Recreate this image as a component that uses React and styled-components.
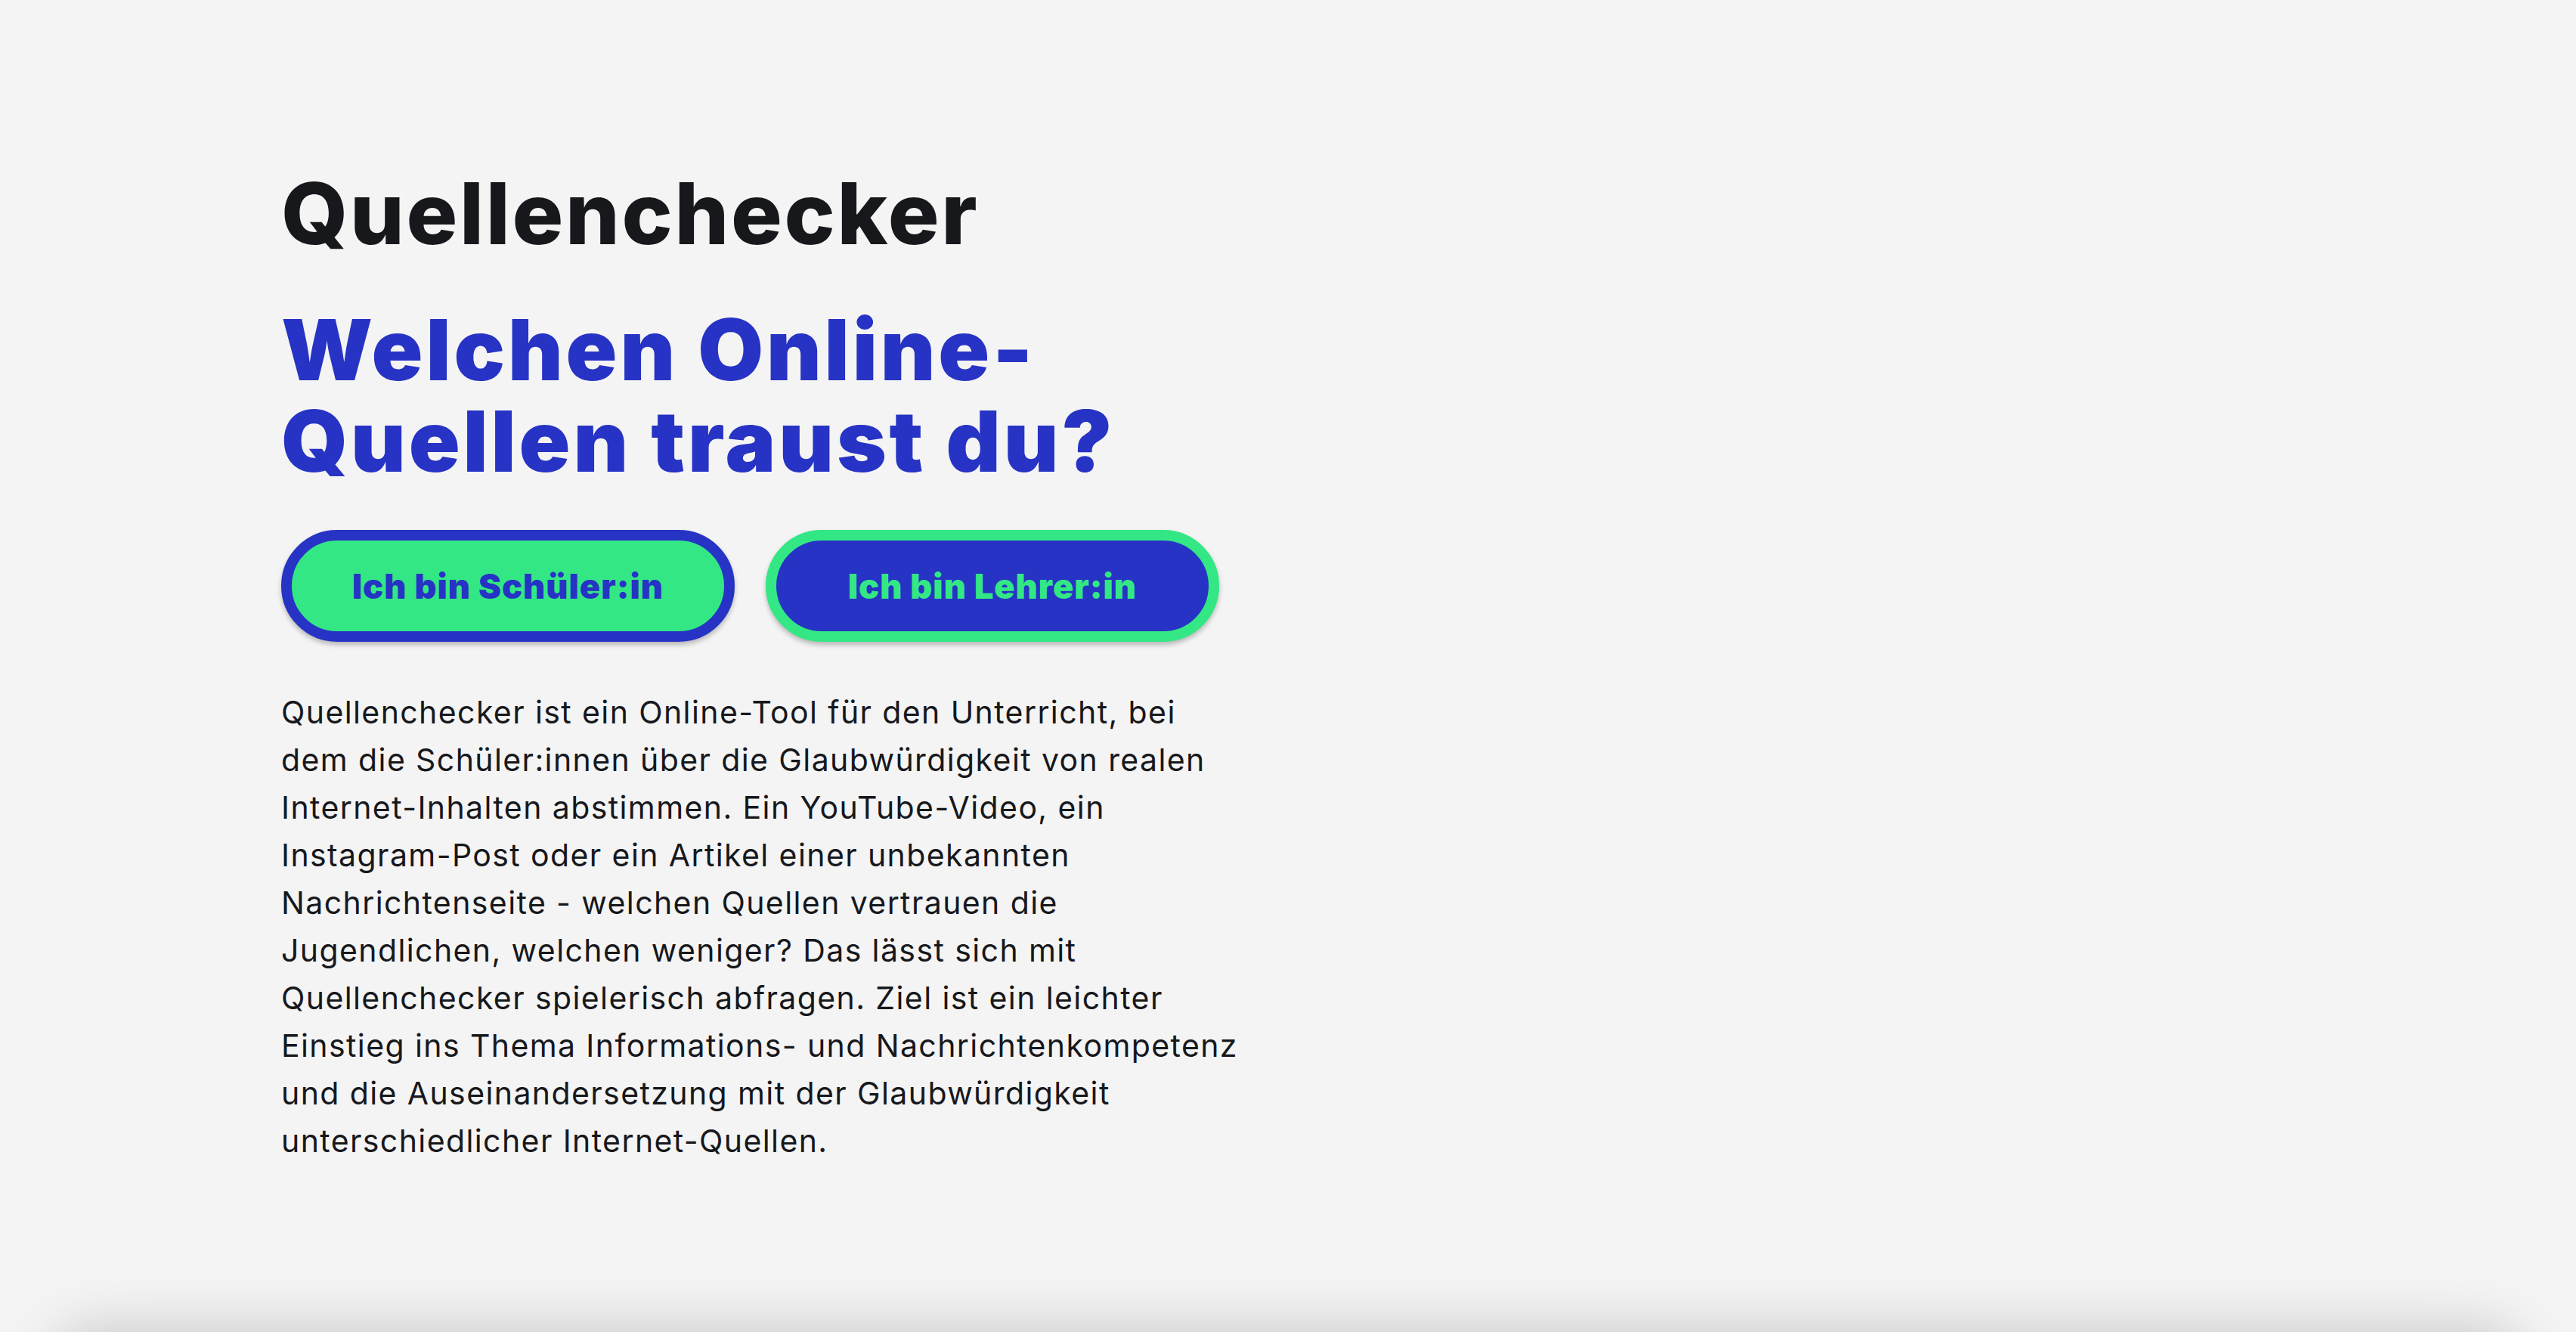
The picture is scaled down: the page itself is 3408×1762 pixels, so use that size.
import React from 'react'
import styled, { createGlobalStyle } from 'styled-components'

const GlobalStyle = createGlobalStyle`
  html, body {
    margin: 0;
    padding: 0;
    background: #f4f4f4;
  }
  body {
    font-family: 'Inter', 'Liberation Sans', sans-serif;
    color: #17181c;
  }
`

const App = () => {
  return (
    <Page>
      <GlobalStyle />
      <Hero>
        <Title>Quellenchecker</Title>
        <Headline>
          Welchen Online-
          <br />
          Quellen traust du?
        </Headline>
        <Actions>
          <RoleButton variant="student">Ich bin Schüler:in</RoleButton>
          <RoleButton variant="teacher">Ich bin Lehrer:in</RoleButton>
        </Actions>
        <Intro>
          Quellenchecker ist ein Online-Tool für den Unterricht, bei
          <br />
          dem die Schüler:innen über die Glaubwürdigkeit von realen
          <br />
          Internet-Inhalten abstimmen. Ein YouTube-Video, ein
          <br />
          Instagram-Post oder ein Artikel einer unbekannten
          <br />
          Nachrichtenseite - welchen Quellen vertrauen die
          <br />
          Jugendlichen, welchen weniger? Das lässt sich mit
          <br />
          Quellenchecker spielerisch abfragen. Ziel ist ein leichter
          <br />
          Einstieg ins Thema Informations- und Nachrichtenkompetenz
          <br />
          und die Auseinandersetzung mit der Glaubwürdigkeit
          <br />
          unterschiedlicher Internet-Quellen.
        </Intro>
      </Hero>
      <Card />
    </Page>
  )
}

const Page = styled.div`
  background: #f4f4f4;
  padding-bottom: 120px;
`

const Hero = styled.section`
  min-height: 100vh;
  box-sizing: border-box;
  padding: 226px 0 0 372px;
  display: flex;
  flex-direction: column;
  align-items: flex-start;
`

const Title = styled.h1`
  margin: 0;
  font-size: 113px;
  line-height: 113px;
  font-weight: 800;
  letter-spacing: 2.7px;
  color: #17181c;
`

const Headline = styled.h2`
  margin: 63px 0 0;
  font-size: 112px;
  line-height: 121px;
  font-weight: 900;
  letter-spacing: 3.9px;
  color: #2733c4;
`

const Actions = styled.div`
  display: flex;
  gap: 41px;
  margin-top: 57px;
`

const RoleButton = styled.button`
  width: 600px;
  height: 148px;
  box-sizing: border-box;
  border-radius: 74px;
  border: 14px solid ${(props) => (props.variant === 'student' ? '#2733c4' : '#33e884')};
  background: ${(props) => (props.variant === 'student' ? '#33e884' : '#2733c4')};
  color: ${(props) => (props.variant === 'student' ? '#2733c4' : '#33e884')};
  font-family: 'Inter', 'Liberation Sans', sans-serif;
  font-size: 45px;
  font-weight: 900;
  letter-spacing: 1px;
  box-shadow: 0 4px 6px rgba(0, 0, 0, 0.25);
  cursor: pointer;
  display: flex;
  align-items: center;
  justify-content: center;
  padding: 0;
`

const Intro = styled.p`
  margin: 62px 0 0;
  font-size: 41px;
  line-height: 63px;
  font-weight: 400;
  letter-spacing: 1.4px;
  color: #17181c;
`

const Card = styled.section`
  margin: 0 72px;
  height: 600px;
  border-radius: 48px;
  background: #f4f4f4;
  box-shadow: 0 0 80px rgba(0, 0, 0, 0.2);
`

export default App
